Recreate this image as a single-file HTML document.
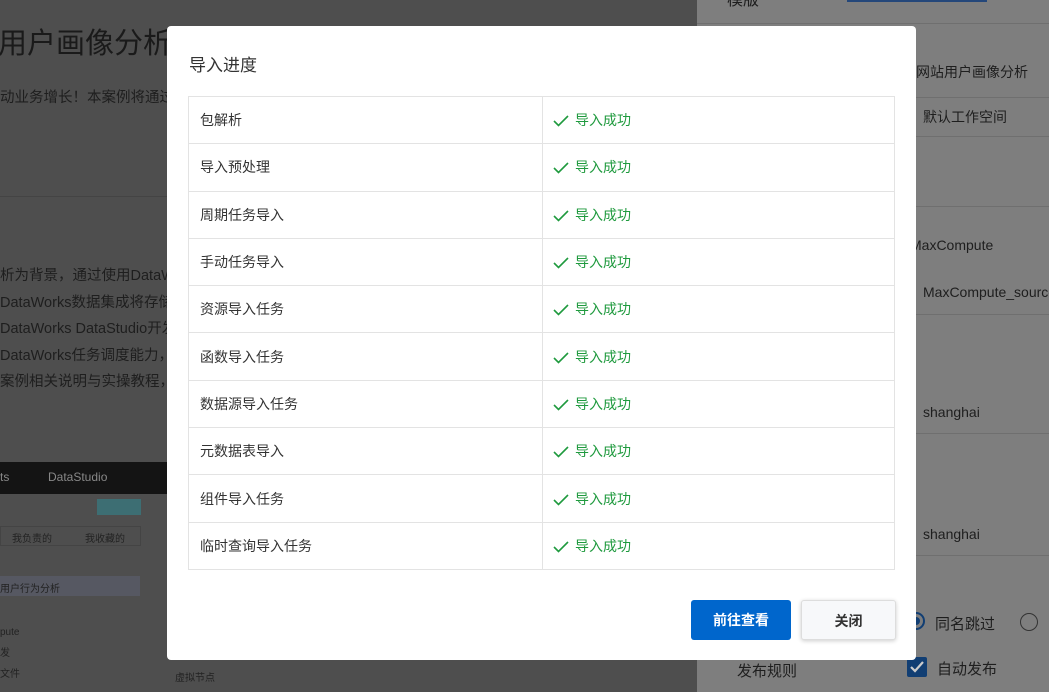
<!DOCTYPE html>
<html><head><meta charset="utf-8"><style>
*{margin:0;padding:0;box-sizing:border-box}
body{width:1049px;height:692px;overflow:hidden;position:relative;background:#4e4e4e;font-family:"Liberation Sans","Noto Sans CJK SC",sans-serif}
.a{position:absolute;white-space:nowrap}
.bg{color:#1e1e1e}
.rp{position:absolute;left:697px;top:0;width:352px;height:692px;background:#7e7e7e}
.line{position:absolute;height:1px;background:#6f6f6f}
.modal{position:absolute;left:167px;top:26px;width:749px;height:634px;background:#fff;border-radius:4px}
table{position:absolute;left:21px;top:70px;width:707px;border-collapse:collapse}
td{border:1px solid #e3e3e3;height:47.3px;font-size:14px;color:#333;padding-left:11px}
td.s{color:#1f9a3e;padding-left:10px}
td.s svg{vertical-align:-2px;margin-right:6px}
.btn{position:absolute;top:574px;height:40px;border-radius:3px;font-size:14px;font-weight:bold;text-align:center;line-height:40px}
</style></head><body>
<div class="a bg" style="left:-2px;top:20px;font-size:29px;color:#1a1a1a">用户画像分析</div>
<div class="a bg" style="left:0;top:86px;font-size:14.5px">动业务增长！本案例将通过</div>
<div class="line" style="left:0;top:196px;width:167px;background:#444"></div>
<div class="a bg" style="left:0;top:263px;font-size:14.5px;line-height:26.5px">析为背景，通过使用DataW<br>DataWorks数据集成将存储<br>DataWorks DataStudio开发<br>DataWorks任务调度能力，<br>案例相关说明与实操教程，</div>
<div style="position:absolute;left:0;top:462px;width:167px;height:32px;background:#141414"></div>
<div class="a" style="left:48px;top:470px;font-size:12px;color:#888">DataStudio</div>
<div class="a" style="left:0;top:470px;font-size:12px;color:#888">ts</div>
<div style="position:absolute;left:97px;top:499px;width:44px;height:16px;background:#3d6e73"></div>
<div style="position:absolute;left:0;top:526px;width:141px;height:20px;border:1px solid #444"></div>
<div class="a" style="left:12px;top:530px;font-size:10px;color:#222">我负责的</div>
<div class="a" style="left:85px;top:530px;font-size:10px;color:#222">我收藏的</div>
<div style="position:absolute;left:0;top:576px;width:140px;height:20px;background:#565862"></div>
<div class="a" style="left:0;top:580px;font-size:10px;color:#222">用户行为分析</div>
<div class="a" style="left:0;top:622px;font-size:10px;color:#222;line-height:21px">pute<br>发<br>文件</div>
<div class="a" style="left:175px;top:669px;font-size:10px;color:#222">虚拟节点</div>
<div class="rp">
 <div class="a" style="left:30px;top:-14px;font-size:16px;color:#1d1d1d">模版</div>
 <div style="position:absolute;left:150px;top:0;width:140px;height:2px;background:#24477a"></div>
 <div class="line" style="left:0;top:23px;width:352px"></div>
 <div class="a" style="left:219px;top:62px;font-size:14px;color:#1e1e1e">网站用户画像分析</div>
 <div class="line" style="left:0;top:97px;width:352px"></div>
 <div class="a" style="left:226px;top:107px;font-size:14px;color:#1e1e1e">默认工作空间</div>
 <div class="line" style="left:0;top:136px;width:352px"></div>
 <div class="a" style="left:213px;top:237px;font-size:14px;color:#1e1e1e">MaxCompute</div>
 <div class="line" style="left:0;top:206px;width:352px"></div>
 <div class="a" style="left:226px;top:284px;font-size:14px;color:#1e1e1e">MaxCompute_source</div>
 <div class="line" style="left:0;top:314px;width:352px"></div>
 <div class="a" style="left:226px;top:404px;font-size:14px;color:#1e1e1e">shanghai</div>
 <div class="line" style="left:0;top:433px;width:352px"></div>
 <div class="a" style="left:226px;top:526px;font-size:14px;color:#1e1e1e">shanghai</div>
 <div class="line" style="left:0;top:555px;width:352px"></div>
 <div style="position:absolute;left:210px;top:612px;width:18px;height:18px;border:2px solid #113e73;border-radius:50%"><div style="position:absolute;left:3px;top:3px;width:8px;height:8px;border-radius:50%;background:#113e73"></div></div>
 <div class="a" style="left:238px;top:613px;font-size:15px;color:#1e1e1e">同名跳过</div>
 <div style="position:absolute;left:323px;top:613px;width:18px;height:18px;border:1px solid #333;border-radius:50%"></div>
 <div style="position:absolute;left:210px;top:657px;width:20px;height:20px;background:#113e73;border-radius:2px"><svg width="20" height="20" viewBox="0 0 20 20"><path d="M4 10l4 4 8-9" fill="none" stroke="#ccc" stroke-width="2.2"/></svg></div>
 <div class="a" style="left:240px;top:658px;font-size:15px;color:#1e1e1e">自动发布</div>
 <div class="a" style="left:40px;top:660px;font-size:15px;color:#1e1e1e">发布规则</div>
</div>
<div class="modal">
 <div class="a" style="left:22px;top:25px;font-size:17px;color:#333">导入进度</div>
 <table>
 <tr><td style="width:354px">包解析</td><td class="s"><svg width="16" height="12" viewBox="0 0 16 12"><path d="M1 6l4.5 4.5L15 1" fill="none" stroke="#1f9a3e" stroke-width="1.6"/></svg>导入成功</td></tr>
 <tr><td>导入预处理</td><td class="s"><svg width="16" height="12" viewBox="0 0 16 12"><path d="M1 6l4.5 4.5L15 1" fill="none" stroke="#1f9a3e" stroke-width="1.6"/></svg>导入成功</td></tr>
 <tr><td>周期任务导入</td><td class="s"><svg width="16" height="12" viewBox="0 0 16 12"><path d="M1 6l4.5 4.5L15 1" fill="none" stroke="#1f9a3e" stroke-width="1.6"/></svg>导入成功</td></tr>
 <tr><td>手动任务导入</td><td class="s"><svg width="16" height="12" viewBox="0 0 16 12"><path d="M1 6l4.5 4.5L15 1" fill="none" stroke="#1f9a3e" stroke-width="1.6"/></svg>导入成功</td></tr>
 <tr><td>资源导入任务</td><td class="s"><svg width="16" height="12" viewBox="0 0 16 12"><path d="M1 6l4.5 4.5L15 1" fill="none" stroke="#1f9a3e" stroke-width="1.6"/></svg>导入成功</td></tr>
 <tr><td>函数导入任务</td><td class="s"><svg width="16" height="12" viewBox="0 0 16 12"><path d="M1 6l4.5 4.5L15 1" fill="none" stroke="#1f9a3e" stroke-width="1.6"/></svg>导入成功</td></tr>
 <tr><td>数据源导入任务</td><td class="s"><svg width="16" height="12" viewBox="0 0 16 12"><path d="M1 6l4.5 4.5L15 1" fill="none" stroke="#1f9a3e" stroke-width="1.6"/></svg>导入成功</td></tr>
 <tr><td>元数据表导入</td><td class="s"><svg width="16" height="12" viewBox="0 0 16 12"><path d="M1 6l4.5 4.5L15 1" fill="none" stroke="#1f9a3e" stroke-width="1.6"/></svg>导入成功</td></tr>
 <tr><td>组件导入任务</td><td class="s"><svg width="16" height="12" viewBox="0 0 16 12"><path d="M1 6l4.5 4.5L15 1" fill="none" stroke="#1f9a3e" stroke-width="1.6"/></svg>导入成功</td></tr>
 <tr><td>临时查询导入任务</td><td class="s"><svg width="16" height="12" viewBox="0 0 16 12"><path d="M1 6l4.5 4.5L15 1" fill="none" stroke="#1f9a3e" stroke-width="1.6"/></svg>导入成功</td></tr>
 </table>
 <div class="btn" style="left:524px;width:100px;background:#0066cc;color:#fff">前往查看</div>
 <div class="btn" style="left:634px;width:95px;background:#f7f8fa;color:#333;border:1px solid #ddd;box-shadow:0 1px 4px rgba(0,0,0,.2)">关闭</div>
</div>
</body></html>
